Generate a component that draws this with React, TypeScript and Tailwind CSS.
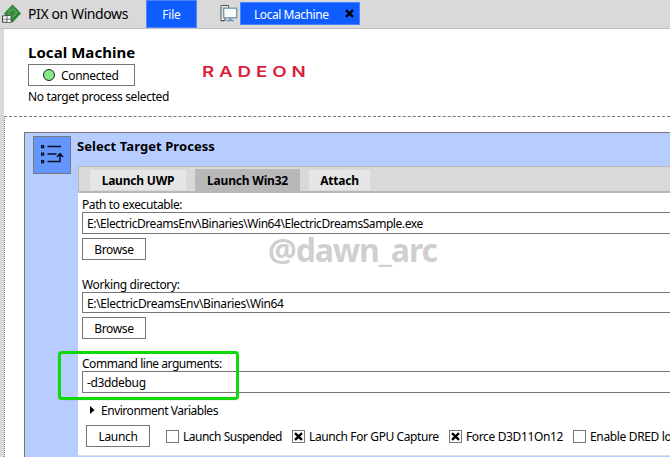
import React from 'react';

function PixLogo() {
  return (
    <svg width="20" height="20" viewBox="0 0 20 20" className="block shrink-0">
      <path d="M10.5 0.5 19 9.5 10.5 18.5 2 9.5Z" fill="#237c2b" />
      <path d="M10.5 2 17.4 9.5 10.5 16.8 3.6 9.5Z" fill="#36913c" stroke="#55a35a" strokeWidth="0.5" />
      <circle cx="10.6" cy="8.7" r="3.7" fill="none" stroke="#79ba7b" strokeWidth="0.6" />
      <circle cx="10.6" cy="8.7" r="1.5" fill="#1a6822" stroke="#79ba7b" strokeWidth="0.5" />
      <path d="m12 14 4.5-4.5M13 3.7l3.8 4" stroke="#175f20" strokeWidth="0.8" />
      <path d="m0 11.5 9.5-.8v8.3L0 18.4Z" fill="#444" />
      <path d="m1 12.4 3.6-.3v2.6H1ZM5.4 12l3.2-.3v3H5.4ZM1 15.6h3.6v2.2L1 17.6ZM5.4 15.6h3.2v2.6L5.4 18Z" fill="#fff" />
    </svg>
  );
}

function ComputerIcon() {
  return (
    <svg width="18" height="18" viewBox="0 0 18 18" className="block shrink-0">
      <path d="M1 1.5h7.5V5H5v11.5H1Z" fill="#eee" stroke="#555" />
      <path d="M2.5 4h4M2.5 6.5h2M2.5 9h1.5" stroke="#999" />
      <path d="M1 17h4" stroke="#444" strokeDasharray="1 1" />
      <rect x="3.7" y="4.2" width="13" height="9.6" fill="#fafafa" stroke="#7298b0" strokeWidth="1.3" />
      <path d="M9 14h2.5v2H14v1.3H6.5V16H9Z" fill="#6c9bb8" />
    </svg>
  );
}

function Cross() {
  return (
    <svg width="9" height="9" viewBox="0 0 9 9" className="block shrink-0">
      <path d="M1 1.2 8 7.8M8 1.2 1 7.8" stroke="#000" strokeWidth="2.3" />
    </svg>
  );
}

function ProcessIcon() {
  return (
    <svg width="24" height="22" viewBox="0 0 24 22" className="block" fill="none" stroke="#0b1020">
      <path d="M1.6 1.6h2v2h-2ZM1.6 9.1h2v2h-2ZM1.6 16.6h2v2h-2Z" strokeWidth="1.3" />
      <path d="M7.5 2.5H21M7.5 10h9M7.5 17.5H19" strokeWidth="1.3" />
      <path d="M20 18.5V10M17 13l3-3.3 3 3.3" strokeWidth="1.5" />
    </svg>
  );
}

function Button({ children }: { children: React.ReactNode }) {
  return (
    <button className="flex h-[22px] w-16 shrink-0 items-center justify-center border border-[#777] bg-white pt-[2px] text-[12px] tracking-[-0.35px]">
      {children}
    </button>
  );
}

function Field({ label, value, labelTracking, tracking, height }: {
  label: string; value: string; labelTracking: string; tracking: string; height: string;
}) {
  return (
    <div>
      <div className={`h-4 whitespace-nowrap pt-[1px] leading-4 ${labelTracking}`}>{label}</div>
      <div className={`flex w-[640px] items-center border border-[#777] bg-white pl-1 pt-[2px] whitespace-nowrap ${height} ${tracking}`}>
        {value}
      </div>
    </div>
  );
}

function Check({ label, checked, className }: { label: string; checked?: boolean; className: string }) {
  return (
    <label className={`flex shrink-0 items-center whitespace-nowrap ${className}`}>
      <span className="mr-1 flex size-[13px] shrink-0 items-center justify-center border border-[#777] bg-white">
        {checked && <Cross />}
      </span>
      <span className="pt-[2px]">{label}</span>
    </label>
  );
}

export default function App() {
  return (
    <div className="relative flex h-[457px] w-[670px] flex-col overflow-hidden bg-[#d9d9d9] font-['Noto_Sans','Open_Sans',sans-serif] text-[12px] leading-4 text-black">
      <header className="flex h-[29px] shrink-0 items-start border-b border-[#bebebe] pl-[2px]">
        <div className="mt-[4px]"><PixLogo /></div>
        <div className="ml-[6px] w-[118px] whitespace-nowrap pt-1 text-[14px] leading-5 tracking-[-0.4px]">PIX on Windows</div>
        <div className="flex h-7 w-[51px] items-center justify-center border border-[#4c83ff] bg-[#0f5cff] pt-[1px] text-white tracking-[-0.2px]">File</div>
        <div className="ml-[23px] mt-[4px]"><ComputerIcon /></div>
        <div className="ml-[2px] mt-[2px] flex h-[23px] w-[120px] items-center border border-[#4c83ff] bg-[#0f5cff] pl-[13px] text-white">
          <span className="w-[91px] whitespace-nowrap pt-[2px] tracking-[-0.45px]">Local Machine</span>
          <Cross />
        </div>
      </header>

      <main className="ml-1 flex min-h-0 flex-1 flex-col bg-white">
        <section className="flex h-[87px] shrink-0 pl-6 pt-[14px]">
          <div className="w-[174px]">
            <h1 className="h-[21px] whitespace-nowrap text-[15px] font-bold leading-[19px] tracking-[0.05px]">Local Machine</h1>
            <button className="flex h-[22px] w-[107px] items-center border border-[#777] pl-[14px]">
              <span className="mr-[6px] size-3 rounded-full border border-[#222] bg-[#87e887]" />
              <span className="pt-[2px] tracking-[-0.35px]">Connected</span>
            </button>
            <p className="mt-[3px] whitespace-nowrap tracking-[-0.35px]">No target process selected</p>
          </div>
          <div className="origin-left scale-x-[1.25] whitespace-nowrap pt-[19px] font-['Inter',sans-serif] text-[15px] font-semibold leading-5 tracking-[3.9px] text-[#dc1e3c]">RADEON</div>
        </section>

        <section className="min-h-0 flex-1 border-l border-t border-dashed border-[#777] pl-[19px] pt-[15px] [border-left-style:dotted]">
          <div className="flex h-[400px] border-l border-t border-[#777] bg-[#b8cdff]">
            <div className="w-[52px] shrink-0 pl-2 pt-[3px]">
              <div className="flex size-[38px] items-center justify-center border border-[#777] bg-[#6495ff]"><ProcessIcon /></div>
            </div>
            <div className="min-w-0 flex-1">
              <h2 className="h-[33px] whitespace-nowrap pt-1 text-[13px] font-bold leading-[18px] tracking-[0.07px]">Select Target Process</h2>
              <nav className="ml-[1px] flex h-[27px] border-b-2 border-t border-l border-[#b8b8b8] bg-[#d9d9d9] pl-[11px] text-[12px] font-bold">
                <div className="mt-[3px] flex h-5 w-24 items-center justify-center bg-[#e6e6e6] pt-[2px] tracking-[-0.2px]">Launch UWP</div>
                <div className="ml-[9px] mt-[2px] flex h-[23px] w-[105px] items-center justify-center bg-[#b8b8b8] pt-[1px] tracking-[-0.2px]">Launch Win32</div>
                <div className="ml-[9px] mt-[3px] flex h-5 w-[61px] items-center justify-center bg-[#e6e6e6] pt-[2px] tracking-[-0.2px]">Attach</div>
              </nav>
              <div className="ml-[1px] h-[263px] border-b border-[#dedfe8] bg-white pl-1 pt-[3px]">
                <Field label="Path to executable:" value="E:\ElectricDreamsEnv\Binaries\Win64\ElectricDreamsSample.exe" labelTracking="tracking-[-0.4px]" tracking="tracking-[-0.44px]" height="h-[22px]" />
                <div className="mt-1"><Button>Browse</Button></div>
                <div className="mt-4"><Field label="Working directory:" value="E:\ElectricDreamsEnv\Binaries\Win64" labelTracking="tracking-[-0.37px]" tracking="tracking-[-0.35px]" height="h-[21px]" /></div>
                <div className="mt-1"><Button>Browse</Button></div>
                <div className="mt-4"><Field label="Command line arguments:" value="-d3ddebug" labelTracking="tracking-[-0.47px]" tracking="tracking-[-0.35px]" height="h-[22px]" /></div>
                <div className="mt-[9px] flex h-4 items-center pl-2">
                  <svg width="5" height="8" viewBox="0 0 5 8"><path d="m0 0 4.5 4L0 8Z" /></svg>
                  <span className="ml-[6px] pt-[1px] tracking-[-0.48px]">Environment Variables</span>
                </div>
                <div className="mt-[7px] flex items-center pl-1">
                  <Button>Launch</Button>
                  <Check label="Launch Suspended" className="ml-4 w-[126px] tracking-[-0.5px]" />
                  <Check label="Launch For GPU Capture" checked className="w-[157px] tracking-[-0.4px]" />
                  <Check label="Force D3D11On12" checked className="w-[124px] tracking-[-0.37px]" />
                  <Check label="Enable DRED lo" className="tracking-[-0.35px]" />
                </div>
              </div>
            </div>
          </div>
        </section>
      </main>

      <div className="absolute left-[268px] top-[228px] text-[32px] font-bold leading-[44px] tracking-[-1.1px] text-[#808080]/40">@dawn_arc</div>
      <div className="absolute left-[58px] top-[351px] h-[49px] w-[181px] rounded-[4px] border-[3px] border-[#12d80b] shadow-[0_0_1px_#888]" />
    </div>
  );
}
